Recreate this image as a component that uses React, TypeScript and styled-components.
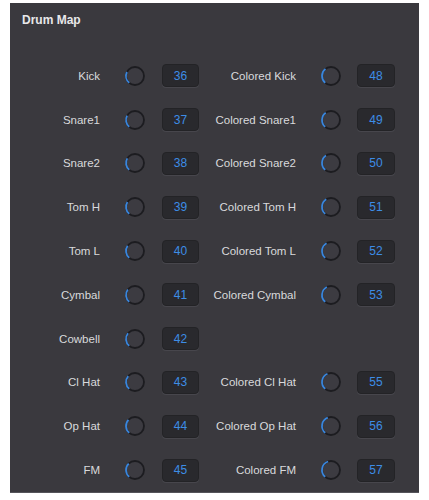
import React from "react";
import styled, { createGlobalStyle } from "styled-components";

const Global = createGlobalStyle`
  html, body { margin: 0; padding: 0; background: #ffffff; }
  body { font-family: "Liberation Sans", Arial, sans-serif; }
`;

const Panel = styled.div`
  margin: 3px 0 0 10px;
  width: 409px;
  height: 490px;
  box-sizing: border-box;
  background: #3a393e;
  border-bottom: 1px solid #55545a;
  display: flex;
  flex-direction: column;
`;

const Title = styled.div`
  color: #e8e8ea;
  font-weight: bold;
  font-size: 12px;
  padding: 10px 0 0 12px;
  height: 51px;
  box-sizing: border-box;
`;

const Grid = styled.div`
  display: grid;
  grid-template-columns: 90px 62px 37px 97px 61px 38px;
  grid-auto-rows: 43.8px;
  align-items: center;
`;

const Label = styled.div`
  color: #d9d9dc;
  font-size: 11.5px;
  text-align: right;
  white-space: nowrap;
`;

const KnobWrap = styled.div`
  margin-left: 24px;
  width: 22px;
  height: 22px;
  display: flex;
`;

const Box = styled.div`
  height: 23px;
  box-sizing: border-box;
  border-radius: 4px;
  background: #29292d;
  border: 1px solid #232326;
  box-shadow: 0 1px 0 #47464c;
  color: #3d8de6;
  font-size: 12px;
  display: flex;
  align-items: center;
  justify-content: center;
`;

const Empty = styled.div``;

function polar(cx: number, cy: number, r: number, deg: number) {
  const a = ((deg - 90) * Math.PI) / 180;
  return [cx + r * Math.cos(a), cy + r * Math.sin(a)];
}

const Knob: React.FC<{ value: number }> = ({ value }) => {
  const start = -140;
  const end = start + (value / 127) * 270;
  const [x1, y1] = polar(11, 11, 9, start);
  const [x2, y2] = polar(11, 11, 9, end);
  const large = end - start > 180 ? 1 : 0;
  return (
    <KnobWrap>
      <svg width="22" height="22" viewBox="0 0 22 22">
        <circle cx="11" cy="11" r="9" fill="#3c3b41" stroke="#1c1c20" strokeWidth="1.8" />
        <path
          d={`M ${x1} ${y1} A 9 9 0 ${large} 1 ${x2} ${y2}`}
          fill="none"
          stroke="#3a86dc"
          strokeWidth="1.8"
        />
      </svg>
    </KnobWrap>
  );
};

type Item = { name: string; value: number } | null;

const rows: [Item, Item][] = [
  [{ name: "Kick", value: 36 }, { name: "Colored Kick", value: 48 }],
  [{ name: "Snare1", value: 37 }, { name: "Colored Snare1", value: 49 }],
  [{ name: "Snare2", value: 38 }, { name: "Colored Snare2", value: 50 }],
  [{ name: "Tom H", value: 39 }, { name: "Colored Tom H", value: 51 }],
  [{ name: "Tom L", value: 40 }, { name: "Colored Tom L", value: 52 }],
  [{ name: "Cymbal", value: 41 }, { name: "Colored Cymbal", value: 53 }],
  [{ name: "Cowbell", value: 42 }, null],
  [{ name: "Cl Hat", value: 43 }, { name: "Colored Cl Hat", value: 55 }],
  [{ name: "Op Hat", value: 44 }, { name: "Colored Op Hat", value: 56 }],
  [{ name: "FM", value: 45 }, { name: "Colored FM", value: 57 }],
];

const Cell: React.FC<{ item: Item }> = ({ item }) =>
  item ? (
    <>
      <Label>{item.name}</Label>
      <Knob value={item.value} />
      <Box>{item.value}</Box>
    </>
  ) : (
    <>
      <Empty />
      <Empty />
      <Empty />
    </>
  );

export default function App() {
  return (
    <>
      <Global />
      <Panel>
        <Title>Drum Map</Title>
        <Grid>
          {rows.map(([a, b], i) => (
            <React.Fragment key={i}>
              <Cell item={a} />
              <Cell item={b} />
            </React.Fragment>
          ))}
        </Grid>
      </Panel>
    </>
  );
}
